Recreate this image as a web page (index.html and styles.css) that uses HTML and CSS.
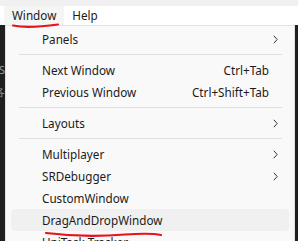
FILE: index.html
```html
<!doctype html>
<html lang="en">
<head>
  <meta charset="UTF-8">
  <title>Window menu</title>
  <link rel="stylesheet" href="styles.css">
</head>
<body>
  <div class="topstrip"></div>
  <div class="menubar">
    <div class="mb-item hover">Window</div>
    <div class="mb-item">Help</div>
  </div>
  <div class="area">
    <div class="side left">
      <div class="ghost g1">S</div>
      <div class="ghost g2">各</div>
    </div>
    <div class="menu">
      <div class="item"><span class="label">Panels</span><svg class="chev" width="5" height="9" viewBox="0 0 5 9"><path d="M0.8 0.8 L4.2 4.5 L0.8 8.2"/></svg></div>
      <div class="sep"></div>
      <div class="item"><span class="label">Next Window</span><span class="key">Ctrl+Tab</span></div>
      <div class="item"><span class="label">Previous Window</span><span class="key">Ctrl+Shift+Tab</span></div>
      <div class="sep"></div>
      <div class="item"><span class="label">Layouts</span><svg class="chev" width="5" height="9" viewBox="0 0 5 9"><path d="M0.8 0.8 L4.2 4.5 L0.8 8.2"/></svg></div>
      <div class="sep"></div>
      <div class="item"><span class="label">Multiplayer</span><svg class="chev" width="5" height="9" viewBox="0 0 5 9"><path d="M0.8 0.8 L4.2 4.5 L0.8 8.2"/></svg></div>
      <div class="item"><span class="label">SRDebugger</span><svg class="chev" width="5" height="9" viewBox="0 0 5 9"><path d="M0.8 0.8 L4.2 4.5 L0.8 8.2"/></svg></div>
      <div class="item"><span class="label">CustomWindow</span></div>
      <div class="item active"><span class="label">DragAndDropWindow</span></div>
      <div class="item"><span class="label">UniTask Tracker</span></div>
    </div>
    <div class="side right"></div>
  </div>

  <!-- red pen marks drawn over the screenshot -->
  <svg class="marks" width="298" height="241" viewBox="0 0 298 241">
    <path d="M13 25.5 C 22 27.5, 40 27, 58 24.5"/>
    <path d="M46 233 C 70 236, 100 236.5, 125 234.5 C 140 233.5, 152 233, 161 235"/>
  </svg>
</body>
</html>
```

FILE: styles.css
```css
html, body {
    margin: 0;
    padding: 0;
}
body {
    position: relative;
    width: 298px;
    height: 241px;
    overflow: hidden;
    background: #fff;
    font-family: "Noto Sans", "Open Sans", sans-serif;
    font-size: 11.7px;
    color: #1b1b1b;
}
.topstrip {
    height: 6px;
    background: #f0f0f0;
}
.menubar {
    display: flex;
    height: 19px;
    background: #fff;
    padding-left: 4px;
}
.mb-item {
    padding: 0 8px;
    line-height: 19px;
}
.mb-item.hover {
    background: #f5f5f5;
}
.area {
    display: flex;
    height: 216px;
}
.side {
    background: #1f1f1f;
    overflow: hidden;
}
.side.left {
    width: 5px;
    position: relative;
}
.side.right {
    width: 3px;
}
.ghost {
    position: absolute;
    right: 0;
    color: #9a9a9a;
    font-size: 11px;
}
.g1 { top: 37px; }
.g2 { top: 59px; }
.menu {
    flex: 1;
    background: #f9f9f9;
    border: 1px solid #e3e3e3;
    border-bottom: none;
    padding: 2px 5px 0 5px;
    box-sizing: border-box;
}
.item {
    display: flex;
    align-items: center;
    height: 22px;
    padding: 0 11px 0 31px;
    border-radius: 4px;
}
.item.active {
    background: #f0f0f0;
}
.label {
    flex: 1;
}
.key {
    margin-right: 9px;
}
.chev {
    fill: none;
    stroke: #333;
    stroke-width: 1;
}
.sep {
    height: 1px;
    margin: 4px 7px 4px 8px;
    background: #e0e0e0;
}
.marks {
    position: absolute;
    top: 0;
    left: 0;
    fill: none;
    stroke: #e8121a;
    stroke-width: 2.2;
    stroke-linecap: round;
}
```
